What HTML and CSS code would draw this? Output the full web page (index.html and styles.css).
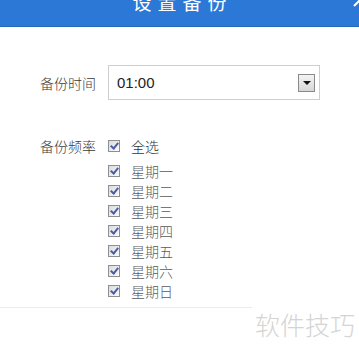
FILE: index.html
```
<!DOCTYPE html>
<html lang="zh-CN">
<head>
    <meta charset="UTF-8">
    <meta name="viewport" content="width=device-width, initial-scale=1.0">
    <title>设置备份</title>
    <link rel="stylesheet" href="styles.css">
</head>
<body>
    <div class="header">
        <div class="title">设置备份</div>
        <svg class="close" width="20" height="20" viewBox="0 0 20 20">
            <path d="M3 3 L17 17 M17 3 L3 17" stroke="#fff" stroke-width="2"/>
        </svg>
    </div>

    <div class="panel">
        <!-- backup time -->
        <div class="row time-row">
            <div class="label">备份时间</div>
            <div class="select">
                <span class="value">01:00</span>
                <span class="drop"><i></i></span>
            </div>
        </div>

        <!-- backup frequency -->
        <div class="row freq-row">
            <div class="label">备份频率</div>
            <div class="checks">
                <div class="check all"><span class="box"></span>全选</div>
                <div class="check"><span class="box"></span>星期一</div>
                <div class="check"><span class="box"></span>星期二</div>
                <div class="check"><span class="box"></span>星期三</div>
                <div class="check"><span class="box"></span>星期四</div>
                <div class="check"><span class="box"></span>星期五</div>
                <div class="check"><span class="box"></span>星期六</div>
                <div class="check"><span class="box"></span>星期日</div>
            </div>
        </div>
    </div>

    <div class="footer-line"></div>
    <div class="watermark">软件技巧</div>
</body>
</html>
```

FILE: styles.css
```
body {
    margin: 0;
    background: #fff;
    font-family: "Noto Sans CJK SC", "Noto Sans", sans-serif;
    color: #333;
    position: relative;
    height: 352px;
    overflow: hidden;
}

.header {
    height: 27px;
    background: #2b78d7;
    border-bottom: 1px solid #2468bd;
    box-sizing: border-box;
    position: relative;
    overflow: hidden;
    display: flex;
    justify-content: center;
}

.title {
    color: #fff;
    font-size: 19px;
    line-height: 20px;
    letter-spacing: 6px;
    margin-top: -8px;
    padding-left: 6px;
}

.close {
    position: absolute;
    right: -12px;
    top: -11px;
}

.panel {
    padding: 38px 0 0 40px;
}

.row {
    display: flex;
}

.label {
    width: 68px;
    font-size: 14px;
    font-weight: 300;
    color: #3a3a3a;
}

.time-row {
    align-items: center;
}

.select {
    width: 212px;
    height: 35px;
    box-sizing: border-box;
    border: 1px solid #cfcfcf;
    display: flex;
    align-items: center;
    justify-content: space-between;
    padding: 0 4px 0 8px;
}

.select .value {
    font-family: "Liberation Sans", sans-serif;
    font-size: 15px;
    color: #222;
}

.drop {
    width: 17px;
    height: 18px;
    box-sizing: border-box;
    border: 1px solid #8a8a8a;
    background: linear-gradient(#f4f4f4, #d6d6d6);
    display: flex;
    justify-content: center;
    align-items: center;
}

.drop i {
    width: 0;
    height: 0;
    border-left: 4px solid transparent;
    border-right: 4px solid transparent;
    border-top: 4px solid #111;
}

.freq-row {
    margin-top: 36px;
}

.freq-row .label {
    line-height: 20px;
}

.check {
    height: 20px;
    display: flex;
    align-items: center;
    font-size: 14px;
    font-weight: 300;
    color: #5a5a5a;
}

.check.all {
    color: #333;
    margin-bottom: 5px;
}

.box {
    width: 12px;
    height: 12px;
    box-sizing: border-box;
    border: 1px solid #8e8f8f;
    background: linear-gradient(135deg, #d8dbe2, #fbfbfb);
    margin-right: 11px;
    position: relative;
}

.box::after {
    content: "";
    position: absolute;
    left: 3px;
    top: 0;
    width: 3px;
    height: 6px;
    border-right: 2px solid #4a5ea0;
    border-bottom: 2px solid #4a5ea0;
    transform: rotate(40deg);
}

.footer-line {
    margin-top: 6px;
    width: 252px;
    height: 1px;
    background: #ececec;
}

.watermark {
    position: absolute;
    right: 4px;
    bottom: 10px;
    font-size: 25px;
    font-weight: 300;
    color: #d4d4d4;
}
```
